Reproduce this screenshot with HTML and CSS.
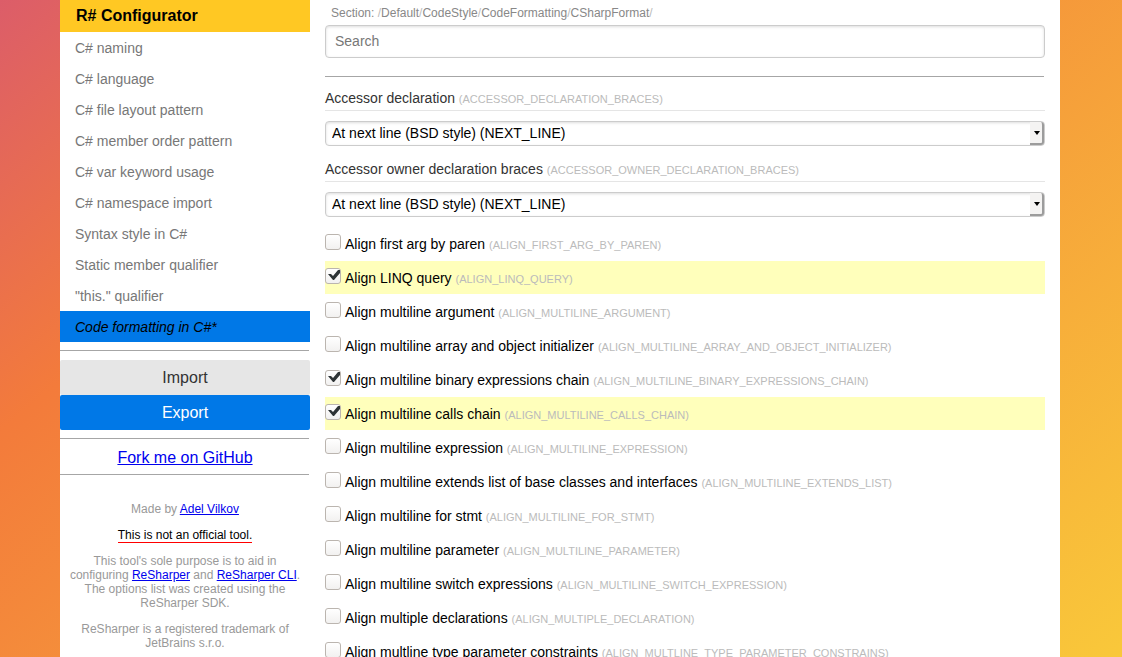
FILE: index.html
```html
<!DOCTYPE html>
<html lang="en">
<head>
<meta charset="utf-8">
<title>R# Configurator</title>
<meta name="viewport" content="width=device-width, initial-scale=1">
<link rel="stylesheet" href="styles.css">
</head>
<body>
<div class="page">
  <aside class="sidebar">
    <h1 class="brand">R# Configurator</h1>
    <nav class="menu">
      <a href="#naming">C# naming</a>
      <a href="#language">C# language</a>
      <a href="#layout">C# file layout pattern</a>
      <a href="#order">C# member order pattern</a>
      <a href="#var">C# var keyword usage</a>
      <a href="#namespace">C# namespace import</a>
      <a href="#syntax">Syntax style in C#</a>
      <a href="#static">Static member qualifier</a>
      <a href="#this">"this." qualifier</a>
      <a href="#formatting" class="active" aria-current="page">Code formatting in C#*</a>
    </nav>
    <hr class="rule">
    <div class="actions">
      <button type="button" class="button">Import</button>
      <button type="button" class="button primary">Export</button>
    </div>
    <hr class="rule">
    <p class="fork"><a href="#github">Fork me on GitHub</a></p>
    <hr class="rule">
    <footer class="about">
      <p>Made by <a href="#author">Adel Vilkov</a></p>
      <p><span class="notice">This is not an official tool.</span></p>
      <p>This tool's sole purpose is to aid in configuring <a href="#resharper">ReSharper</a> and <a href="#cli">ReSharper CLI</a>. The options list was created using the ReSharper SDK.</p>
      <p>ReSharper is a registered trademark of JetBrains s.r.o.</p>
    </footer>
  </aside>
  <main class="content">
    <div class="section-path">Section: <i>/</i>Default<i>/</i>CodeStyle<i>/</i>CodeFormatting<i>/</i>CSharpFormat<i>/</i></div>
    <input type="text" class="search" placeholder="Search" aria-label="Search">
    <hr class="rule search-rule">
    <div class="fields">
      <div class="field">
        <label class="field-label" for="accessor">Accessor declaration <small>(ACCESSOR_DECLARATION_BRACES)</small></label>
        <div class="select-box"><select id="accessor"><option>At next line (BSD style) (NEXT_LINE)</option></select></div>
      </div>
      <div class="field">
        <label class="field-label" for="owner">Accessor owner declaration braces <small>(ACCESSOR_OWNER_DECLARATION_BRACES)</small></label>
        <div class="select-box"><select id="owner"><option>At next line (BSD style) (NEXT_LINE)</option></select></div>
      </div>
    </div>
    <div class="options">
      <label class="option"><input type="checkbox"><span>Align first arg by paren <small>(ALIGN_FIRST_ARG_BY_PAREN)</small></span></label>
      <label class="option changed"><input type="checkbox" checked><span>Align LINQ query <small>(ALIGN_LINQ_QUERY)</small></span></label>
      <label class="option"><input type="checkbox"><span>Align multiline argument <small>(ALIGN_MULTILINE_ARGUMENT)</small></span></label>
      <label class="option"><input type="checkbox"><span>Align multiline array and object initializer <small>(ALIGN_MULTILINE_ARRAY_AND_OBJECT_INITIALIZER)</small></span></label>
      <label class="option"><input type="checkbox" checked><span>Align multiline binary expressions chain <small>(ALIGN_MULTILINE_BINARY_EXPRESSIONS_CHAIN)</small></span></label>
      <label class="option changed"><input type="checkbox" checked><span>Align multiline calls chain <small>(ALIGN_MULTILINE_CALLS_CHAIN)</small></span></label>
      <label class="option"><input type="checkbox"><span>Align multiline expression <small>(ALIGN_MULTILINE_EXPRESSION)</small></span></label>
      <label class="option"><input type="checkbox"><span>Align multiline extends list of base classes and interfaces <small>(ALIGN_MULTILINE_EXTENDS_LIST)</small></span></label>
      <label class="option"><input type="checkbox"><span>Align multiline for stmt <small>(ALIGN_MULTILINE_FOR_STMT)</small></span></label>
      <label class="option"><input type="checkbox"><span>Align multiline parameter <small>(ALIGN_MULTILINE_PARAMETER)</small></span></label>
      <label class="option"><input type="checkbox"><span>Align multiline switch expressions <small>(ALIGN_MULTILINE_SWITCH_EXPRESSION)</small></span></label>
      <label class="option"><input type="checkbox"><span>Align multiple declarations <small>(ALIGN_MULTIPLE_DECLARATION)</small></span></label>
      <label class="option"><input type="checkbox"><span>Align multline type parameter constraints <small>(ALIGN_MULTLINE_TYPE_PARAMETER_CONSTRAINS)</small></span></label>
    </div>
  </main>
</div>
</body>
</html>
```
FILE: styles.css
```css
* { box-sizing: border-box; }

body {
  height: 100vh;
  margin: 0;
  overflow: hidden;
  background: linear-gradient(140deg, #dc5d69, #f37b3b 27%, #f9c83a);
  color: #000;
  font-family: "Liberation Sans", Arial, sans-serif;
  font-size: 14px;
}

.page {
  display: flex;
  min-height: 100vh;
  margin: 0 62px 0 60px;
  background: #fff;
}

.rule {
  height: 1px;
  margin: 8px 1px 8px 0;
  border: 0;
  background: #a6a6a6;
}

/* Sidebar */
.sidebar { flex: 0 0 250px; }

.brand {
  margin: 0;
  padding: 0 16px;
  background: #ffc823;
  font-size: 16px;
  line-height: 32px;
}

.menu { display: flex; flex-direction: column; }

.menu a {
  padding: 2px 15px 0;
  color: #777;
  line-height: 29px;
  text-decoration: none;
}

.menu .active {
  background: #0078e7;
  color: #000;
  font-style: italic;
}

.actions { display: flex; flex-direction: column; margin-top: 9px; }

.button {
  height: 35px;
  padding: 0;
  border: 0;
  border-radius: 2px;
  background: #e6e6e6;
  color: #333;
  font: inherit;
  font-size: 16px;
}

.button.primary { background: #0078e7; color: #fff; }

.fork {
  margin: 0;
  padding-top: 2px;
  font-size: 16px;
  line-height: 17px;
  text-align: center;
}

a { color: #0000ee; }

.about {
  margin-top: 27px;
  padding: 0 8px;
  color: #999;
  font-size: 12px;
  line-height: 14px;
  text-align: center;
}

.about p { margin: 0 0 12px; }

.notice { border-bottom: 1px solid #f00; color: #000; }

/* Settings */
.content { flex: 1; min-width: 0; padding: 0 15px; }

.section-path {
  padding: 1px 6px 0;
  color: #888;
  font-size: 12px;
  line-height: 24px;
}

.section-path i { color: #bbb; font-style: normal; }

.search {
  display: block;
  width: 100%;
  height: 33px;
  padding: 0 9px 1px;
  border: 1px solid #ccc;
  border-radius: 4px;
  box-shadow: inset 0 1px 3px #ddd;
  font: inherit;
}

.search::placeholder { color: #777; }

.search-rule { margin: 18px 1px 10px 0; }

.fields {
  display: flex;
  flex-direction: column;
  gap: 12px;
}

.field-label {
  display: block;
  margin-bottom: 10px;
  border-bottom: 1px solid #e5e5e5;
  color: #333;
  line-height: 23px;
}

small { color: #bbb; font-size: 11px; line-height: 1; }

.select-box { position: relative; }

.select-box select {
  display: block;
  width: 100%;
  height: 25px;
  padding: 0 6px 1px;
  appearance: none;
  border: 1px solid #ccc;
  border-radius: 4px;
  background: #fff;
  box-shadow: inset 0 1px 3px #ddd;
  color: #000;
  font: inherit;
}

.select-box::before {
  content: "";
  position: absolute;
  top: 1px;
  right: 1px;
  bottom: 1px;
  width: 12px;
  border: solid #9c9c9c;
  border-width: 0 2px 2px 0;
  border-radius: 0 3px 3px 0;
  background: #f4f3f2;
  pointer-events: none;
}

.select-box::after {
  content: "";
  position: absolute;
  top: 10px;
  right: 5px;
  border: solid transparent;
  border-width: 4px 3px 0;
  border-top-color: #000;
  pointer-events: none;
}

.options {
  display: flex;
  flex-direction: column;
  gap: 1px;
  margin-top: 10px;
}

.option {
  display: flex;
  gap: 4px;
  padding-top: 2px;
  line-height: 31px;
}

.option.changed { background: #ffffbb; }

.option input {
  flex: none;
  width: 16px;
  height: 16px;
  margin: 5px 0 0;
  appearance: none;
  border: 1px solid #bbb5af;
  border-radius: 3px;
  background: linear-gradient(#fff, #f2f1f0);
}

.option input:checked::before {
  content: "";
  display: block;
  width: 14px;
  height: 14px;
  background: #2e3436;
  clip-path: polygon(2px 5px, 5px 5px, 7px 7px, 12px 1px, 14px 1px, 14px 4px, 8px 11px, 7px 11px);
}
```
